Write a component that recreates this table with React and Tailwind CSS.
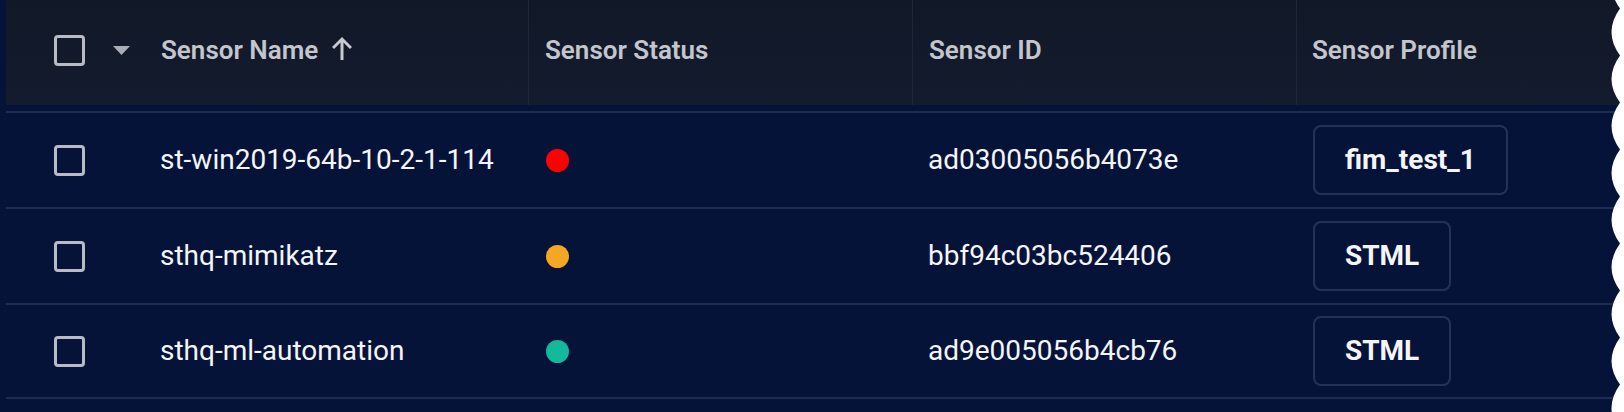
import React from "react";

const rows = [
    { name: "st-win2019-64b-10-2-1-114", status: "bg-[#ff0000]", id: "ad03005056b4073e", profile: "fim_test_1" },
    { name: "sthq-mimikatz", status: "bg-[#f5a623]", id: "bbf94c03bc524406", profile: "STML" },
    { name: "sthq-ml-automation", status: "bg-[#12b99a]", id: "ad9e005056b4cb76", profile: "STML" },
];

function Checkbox() {
    return <div className="w-[31px] h-[31px] shrink-0 rounded-[4px] border-[3px] border-[#b8bbc4]" />;
}

function TornEdge() {
    // white jagged edge on the right of the screenshot
    const period = 47;
    let d = "M26 -60 L22 -38.5";
    for (let y = -38.5; y < 460; y += period) {
        d += ` Q5 ${y + period / 2} 22 ${y + period}`;
    }
    d += " L26 470 Z";
    return (
        <svg className="absolute right-0 top-0" width="26" height="412" viewBox="0 0 26 412">
            <path d={d} fill="#ffffff" />
        </svg>
    );
}

export default function App() {
    return (
        <div className="relative w-[1624px] h-[412px] overflow-hidden bg-[#051339] pl-[6px] font-['Roboto',sans-serif]">
            <div className="flex h-[105px] bg-gradient-to-b from-[#111827] to-[#141b2e] text-[26px] font-semibold text-[#c3c6cd]">
                <div className="w-[523px] flex items-center pl-[48px] pb-[4px] border-r border-[#1e2638]">
                    <Checkbox />
                    <svg className="ml-[28px]" width="17" height="9" viewBox="0 0 17 9">
                        <path d="M0 0 H17 L8.5 9 Z" fill="#a9adb7" />
                    </svg>
                    <span className="ml-[31px]">Sensor Name</span>
                    <svg className="ml-[14px] mt-[-4px]" width="20" height="23" viewBox="0 0 20 23">
                        <path d="M10 0 L20 10 L17.9 12.1 L11.5 5.6 V23 H8.5 V5.6 L2.1 12.1 L0 10 Z" fill="#c8cad0" />
                    </svg>
                </div>
                <div className="w-[384px] flex items-center pl-[16px] pb-[4px] border-r border-[#1e2638]">
                    Sensor Status
                </div>
                <div className="w-[384px] flex items-center pl-[16px] pb-[4px] border-r border-[#1e2638]">
                    Sensor ID
                </div>
                <div className="flex-1 flex items-center pl-[15px] pb-[4px]">Sensor Profile</div>
            </div>
            <div className="mt-[6px]">
                {rows.map((r, i) => (
                    <div
                        key={r.id}
                        className={
                            "flex h-[96px] border-t-2 border-[#1f2c51] text-[28px] text-[#f4f5f8] " +
                            (i === rows.length - 1 ? "border-b-2" : "")
                        }
                    >
                        <div className="w-[523px] flex items-center pl-[48px]">
                            <Checkbox />
                            <span className="ml-[75px]">{r.name}</span>
                        </div>
                        <div className="w-[384px] flex items-center pl-[17px]">
                            <div className={"w-[23px] h-[23px] rounded-full " + r.status} />
                        </div>
                        <div className="w-[384px] flex items-center pl-[15px]">{r.id}</div>
                        <div className="flex-1 flex items-center pl-[16px]">
                            <div className="h-[70px] flex items-center px-[30px] rounded-[8px] border-2 border-[#243257] font-bold">
                                {r.profile}
                            </div>
                        </div>
                    </div>
                ))}
            </div>
            <TornEdge />
        </div>
    );
}
